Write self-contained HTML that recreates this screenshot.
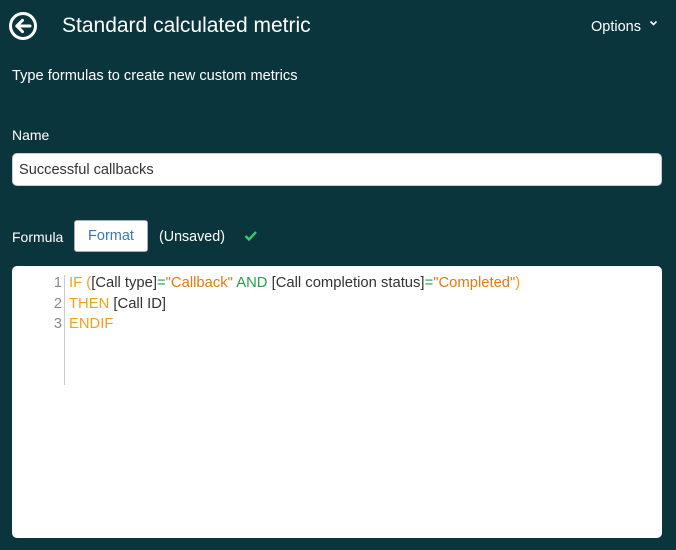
<!DOCTYPE html>
<html><head><style>
body{margin:0;width:676px;height:550px;background:#0b353d;font-family:"Liberation Sans",sans-serif;color:#fff;position:relative;overflow:hidden}
.a{position:absolute}
</style></head><body>
<svg class="a" style="left:8px;top:11px" width="30" height="30" viewBox="0 0 30 30"><circle cx="15" cy="15" r="12.5" fill="none" stroke="#fff" stroke-width="3"/><path d="M22 15H9M14.5 9.3L8.8 15l5.7 5.7" fill="none" stroke="#fff" stroke-width="3" stroke-linecap="round" stroke-linejoin="round"/></svg>
<div class="a" style="left:62px;top:14px;font-size:21px">Standard calculated metric</div>
<div class="a" style="left:591px;top:19px;font-size:14.5px">Options</div>
<svg class="a" style="left:649px;top:20px" width="9" height="7"><path d="M1.5 1.5L4.5 4.5 7.5 1.5" fill="none" stroke="#fff" stroke-width="1.6"/></svg>
<div class="a" style="left:12px;top:68px;font-size:14.6px">Type formulas to create new custom metrics</div>
<div class="a" style="left:12px;top:127px;font-size:14px">Name</div>
<div class="a" style="left:12px;top:153px;width:650px;height:33px;background:#fff;border:1px solid #ccc;border-radius:5px;box-sizing:border-box;color:#333;font-size:14.6px;line-height:33px;padding-left:6px">Successful callbacks</div>
<div class="a" style="left:12px;top:229px;font-size:14px">Formula</div>
<div class="a" style="left:74px;top:220px;width:74px;height:32px;background:#fff;border:1px solid #aab;border-radius:3px;box-sizing:border-box;color:#3a78b4;font-size:14.5px;line-height:31px;text-align:center">Format</div>
<div class="a" style="left:159px;top:229px;font-size:14.3px">(Unsaved)</div>
<svg class="a" style="left:243px;top:229px" width="16" height="14"><path d="M2.5 7L6 10.5 13 3" fill="none" stroke="#2ecc71" stroke-width="2.4"/></svg>
<div class="a" style="left:12px;top:266px;width:650px;height:272px;background:#fff;border-radius:5px"></div>
<div class="a" style="left:64px;top:275px;width:1px;height:110px;background:#ccc"></div>
<div class="a" style="left:40px;top:273px;width:22px;text-align:right;color:#888;font-size:14.5px;line-height:20.5px">1<br>2<br>3</div>
<div class="a" style="left:69px;top:273px;color:#333;font-size:14.8px;line-height:20.5px;white-space:pre"><span style="color:#f0a020">IF (</span>[Call type]<span style="color:#2a9d4a">=</span><span style="color:#e07b10">"Callback"</span> <span style="color:#2a9d4a">AND</span> [Call completion status]<span style="color:#2a9d4a">=</span><span style="color:#e07b10">"Completed"</span><span style="color:#f0a020">)</span>
<span style="color:#f0a020">THEN</span> [Call ID]
<span style="color:#f0a020">ENDIF</span></div>
</body></html>
